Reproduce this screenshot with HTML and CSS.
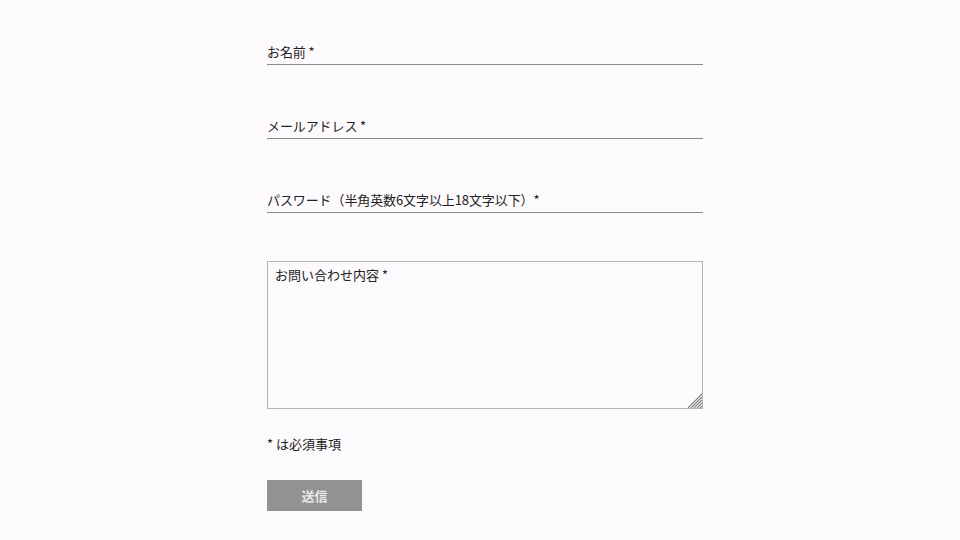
FILE: index.html
```html
<!DOCTYPE html>
<html lang="ja">
<head>
<meta charset="utf-8">
<title>お問い合わせ</title>
<link rel="stylesheet" href="styles.css">
</head>
<body>
<form class="contact">
  <input class="field" type="text" placeholder="お名前 *">
  <input class="field" type="email" placeholder="メールアドレス *">
  <input class="field field-last" type="password" placeholder="パスワード（半角英数6文字以上18文字以下）*">
  <div class="message-wrap">
    <textarea class="message" placeholder="お問い合わせ内容 *"></textarea>
    <svg class="grip" width="15" height="15" viewBox="0 0 15 15" aria-hidden="true">
      <g stroke="#7c7c7c" stroke-width="1.1">
        <line x1="1" y1="15" x2="15" y2="1"/>
        <line x1="4" y1="15" x2="15" y2="4"/>
        <line x1="7" y1="15" x2="15" y2="7"/>
        <line x1="10" y1="15" x2="15" y2="10"/>
        <line x1="13" y1="15" x2="15" y2="13"/>
      </g>
    </svg>
  </div>
  <p class="note">* は必須事項</p>
  <button class="submit" type="button">送信</button>
</form>
</body>
</html>
```

FILE: styles.css
```css
html, body {
  margin: 0;
  padding: 0;
  background: #fcfafc;
}
body {
  font-family: "Noto Sans CJK JP", "Noto Sans", sans-serif;
  font-size: 13px;
  color: #222;
}
.contact {
  width: 436px;
  margin: 0 auto;
  padding: 41px 0 0 10px;
  display: flex;
  flex-direction: column;
  align-items: flex-start;
}
.field {
  display: block;
  width: 436px;
  height: 24px;
  box-sizing: border-box;
  margin: 0 0 49px 0;
  padding: 0 0 2px 0;
  border: none;
  border-bottom: 1px solid #8a8a8a;
  background: transparent;
  font-family: inherit;
  font-size: 13px;
  letter-spacing: -0.1px;
  color: #222;
  outline: none;
}
.field + .field {
  margin-top: 1px;
}
.field-last {
  margin-bottom: 48px;
}
.field::placeholder {
  color: #222;
  opacity: 1;
}
.message-wrap {
  position: relative;
  width: 436px;
  height: 148px;
}
.message {
  display: block;
  width: 436px;
  height: 148px;
  box-sizing: border-box;
  margin: 0;
  padding: 3px 7px;
  border: 1px solid #b4b4b4;
  background: transparent;
  font-family: inherit;
  font-size: 13px;
  color: #222;
  outline: none;
  resize: none;
}
.message::placeholder {
  color: #222;
  opacity: 1;
}
.grip {
  position: absolute;
  right: 1px;
  bottom: 1px;
  display: block;
}
.note {
  margin: 25px 0 0 0;
  line-height: 19px;
  font-size: 13px;
}
.submit {
  margin-top: 27px;
  width: 95px;
  height: 31px;
  border: none;
  background: #929292;
  color: #e8e8e8;
  font-family: inherit;
  font-size: 13px;
  font-weight: bold;
  padding: 0;
}
```
